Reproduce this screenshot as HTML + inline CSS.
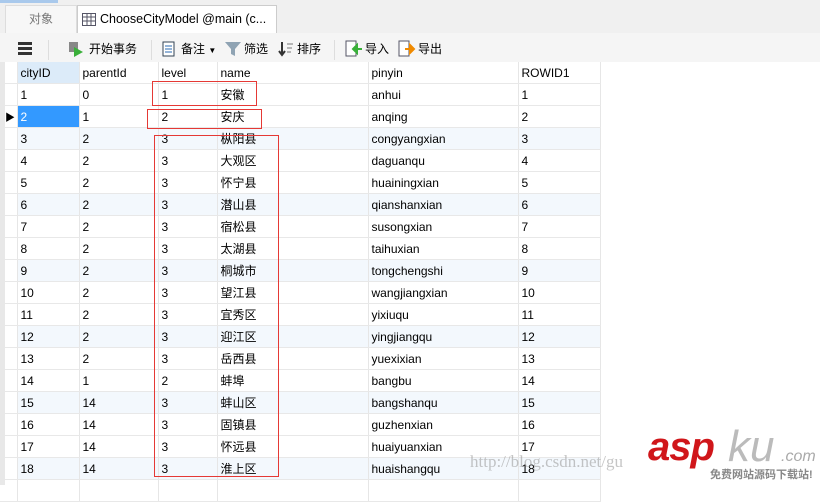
<!DOCTYPE html>
<html><head><meta charset="utf-8"><style>
body{margin:0;width:820px;height:485px;background:#fff;font-family:"Segoe UI","Liberation Sans","Noto Sans CJK SC",sans-serif;font-size:12px;color:#000;position:relative;overflow:hidden}
.abs{position:absolute}
.tb{top:36px;height:26px;line-height:26px;font-size:12px;font-family:"Liberation Sans","Noto Sans CJK SC",sans-serif}
table{position:absolute;left:0;top:62px;border-collapse:collapse;font-family:"Liberation Sans","Noto Sans CJK SC",sans-serif;font-size:12px}
td{height:21px;padding:0 0 0 3px;border-right:1px solid #e6e6e6;border-bottom:1px solid #e8e8e8;white-space:nowrap}
tr.h td{background:#fff}
tr.t td{background:#f3f8fd}
.red{position:absolute;border:1px solid #e53935}
</style></head><body>
<div class="abs" style="left:0;top:0;width:820px;height:33px;background:#f0f0f0"></div>
<div class="abs" style="left:0;top:0;width:58px;height:3px;background:#a9c9ec"></div>
<div class="abs" style="left:5px;top:5px;width:70px;height:28px;background:#f7f7f7;border:1px solid #ddd;border-bottom:none;text-align:center;line-height:26px;color:#777;font-family:'Liberation Sans','Noto Sans CJK SC',sans-serif">对象</div>
<div class="abs" style="left:77px;top:5px;width:198px;height:28px;background:#fff;border:1px solid #ccc;border-bottom:none;line-height:26px;font-family:'Liberation Sans','Noto Sans CJK SC',sans-serif;font-size:12.5px">
<svg class="abs" style="left:4px;top:7px" width="14" height="13"><rect x="0.5" y="0.5" width="13" height="12" fill="#fff" stroke="#556"/><path d="M0 4h14M0 8h14M5 0v13M9 0v13" stroke="#556"/></svg>
<span style="position:absolute;left:22px">ChooseCityModel @main (c...</span></div>
<div class="abs" style="left:0;top:33px;width:820px;height:29px;background:#f5f5f5"></div>
<div class="abs" style="left:18px;top:42px;width:14px;height:3px;background:#333;box-shadow:0 5px 0 #333,0 10px 0 #333"></div>
<div class="abs" style="left:48px;top:40px;width:1px;height:20px;background:#ddd"></div>
<svg class="abs" style="left:68px;top:41px" width="16" height="16"><rect x="1" y="1" width="9" height="10" fill="#888"/><path d="M6 6l9 5-9 5z" fill="#3ab03a"/></svg>
<div class="abs tb" style="left:89px">开始事务</div>
<div class="abs" style="left:151px;top:40px;width:1px;height:20px;background:#ddd"></div>
<svg class="abs" style="left:162px;top:41px" width="14" height="16"><rect x="1" y="1" width="11" height="14" fill="#fff" stroke="#345"/><path d="M3 5h7M3 8h7M3 11h7" stroke="#2a6ab0"/></svg>
<div class="abs tb" style="left:181px">备注 <span style="font-size:8px">▼</span></div>
<svg class="abs" style="left:224px;top:41px" width="18" height="16"><path d="M1 1h16l-6 7v7l-4-2V8z" fill="#8fa3b3"/></svg>
<div class="abs tb" style="left:244px">筛选</div>
<svg class="abs" style="left:278px;top:41px" width="16" height="16"><path d="M4 1v12M1 10l3 4 3-4" stroke="#333" stroke-width="2" fill="none"/><path d="M9 3h6M9 7h5M9 11h4" stroke="#777"/></svg>
<div class="abs tb" style="left:297px">排序</div>
<div class="abs" style="left:334px;top:40px;width:1px;height:20px;background:#ddd"></div>
<svg class="abs" style="left:345px;top:40px" width="18" height="18"><rect x="1" y="1" width="10" height="15" fill="#fff" stroke="#556"/><path d="M17 9H9M12 5l-4 4 4 4z" fill="#3ab03a" stroke="#3ab03a" stroke-width="2"/></svg>
<div class="abs tb" style="left:365px">导入</div>
<svg class="abs" style="left:398px;top:40px" width="18" height="18"><rect x="1" y="1" width="10" height="15" fill="#fff" stroke="#556"/><path d="M7 9h6M12 5l4 4-4 4z" fill="#f08a00" stroke="#f08a00" stroke-width="2"/></svg>
<div class="abs tb" style="left:418px">导出</div>
<table>
<colgroup><col style="width:17px"><col style="width:62px"><col style="width:79px"><col style="width:59px"><col style="width:151px"><col style="width:150px"><col style="width:82px"></colgroup>
<tr class="h"><td style="background:#fff"></td><td style="background:#dcebf9">cityID</td><td>parentId</td><td>level</td><td>name</td><td>pinyin</td><td>ROWID1</td></tr>
<tr><td></td><td>1</td><td>0</td><td>1</td><td>安徽</td><td>anhui</td><td>1</td></tr>
<tr><td style="font-size:10px;padding-left:5px">▶</td><td style="background:#3399ff;color:#fff">2</td><td>1</td><td>2</td><td>安庆</td><td>anqing</td><td>2</td></tr>
<tr class="t"><td style="background:#fff"></td><td>3</td><td>2</td><td>3</td><td>枞阳县</td><td>congyangxian</td><td>3</td></tr>
<tr><td></td><td>4</td><td>2</td><td>3</td><td>大观区</td><td>daguanqu</td><td>4</td></tr>
<tr><td></td><td>5</td><td>2</td><td>3</td><td>怀宁县</td><td>huainingxian</td><td>5</td></tr>
<tr class="t"><td style="background:#fff"></td><td>6</td><td>2</td><td>3</td><td>潜山县</td><td>qianshanxian</td><td>6</td></tr>
<tr><td></td><td>7</td><td>2</td><td>3</td><td>宿松县</td><td>susongxian</td><td>7</td></tr>
<tr><td></td><td>8</td><td>2</td><td>3</td><td>太湖县</td><td>taihuxian</td><td>8</td></tr>
<tr class="t"><td style="background:#fff"></td><td>9</td><td>2</td><td>3</td><td>桐城市</td><td>tongchengshi</td><td>9</td></tr>
<tr><td></td><td>10</td><td>2</td><td>3</td><td>望江县</td><td>wangjiangxian</td><td>10</td></tr>
<tr><td></td><td>11</td><td>2</td><td>3</td><td>宜秀区</td><td>yixiuqu</td><td>11</td></tr>
<tr class="t"><td style="background:#fff"></td><td>12</td><td>2</td><td>3</td><td>迎江区</td><td>yingjiangqu</td><td>12</td></tr>
<tr><td></td><td>13</td><td>2</td><td>3</td><td>岳西县</td><td>yuexixian</td><td>13</td></tr>
<tr><td></td><td>14</td><td>1</td><td>2</td><td>蚌埠</td><td>bangbu</td><td>14</td></tr>
<tr class="t"><td style="background:#fff"></td><td>15</td><td>14</td><td>3</td><td>蚌山区</td><td>bangshanqu</td><td>15</td></tr>
<tr><td></td><td>16</td><td>14</td><td>3</td><td>固镇县</td><td>guzhenxian</td><td>16</td></tr>
<tr><td></td><td>17</td><td>14</td><td>3</td><td>怀远县</td><td>huaiyuanxian</td><td>17</td></tr>
<tr class="t"><td style="background:#fff"></td><td>18</td><td>14</td><td>3</td><td>淮上区</td><td>huaishangqu</td><td>18</td></tr>
<tr><td></td><td></td><td></td><td></td><td></td><td></td><td></td></tr>
</table>
<div class="abs" style="left:0;top:62px;width:5px;height:423px;background:#e8e8e8"></div>
<div class="red" style="left:152px;top:81px;width:103px;height:23px"></div>
<div class="red" style="left:147px;top:109px;width:113px;height:18px"></div>
<div class="red" style="left:154px;top:135px;width:123px;height:340px"></div>
<div class="abs" style="left:470px;top:452px;font-family:'Liberation Serif',serif;font-size:17px;color:rgba(150,150,150,0.55);white-space:nowrap">http://blog.csdn.net/gu</div>
<div class="abs" style="left:648px;top:425px;font-family:'Liberation Sans',sans-serif;font-weight:bold;font-style:italic;font-size:40px;color:#d0161a;letter-spacing:-1px">asp</div>
<div class="abs" style="left:728px;top:422px;font-family:'Liberation Sans',sans-serif;font-style:italic;font-size:44px;color:#bbb">ku</div>
<div class="abs" style="left:781px;top:448px;font-family:'Liberation Sans',sans-serif;font-style:italic;font-size:16px;color:#aaa">.com</div>
<div class="abs" style="left:710px;top:466px;font-family:'Liberation Sans','Noto Sans CJK SC',sans-serif;font-size:11px;color:#888;font-weight:bold">免费网站源码下载站!</div>
</body></html>
